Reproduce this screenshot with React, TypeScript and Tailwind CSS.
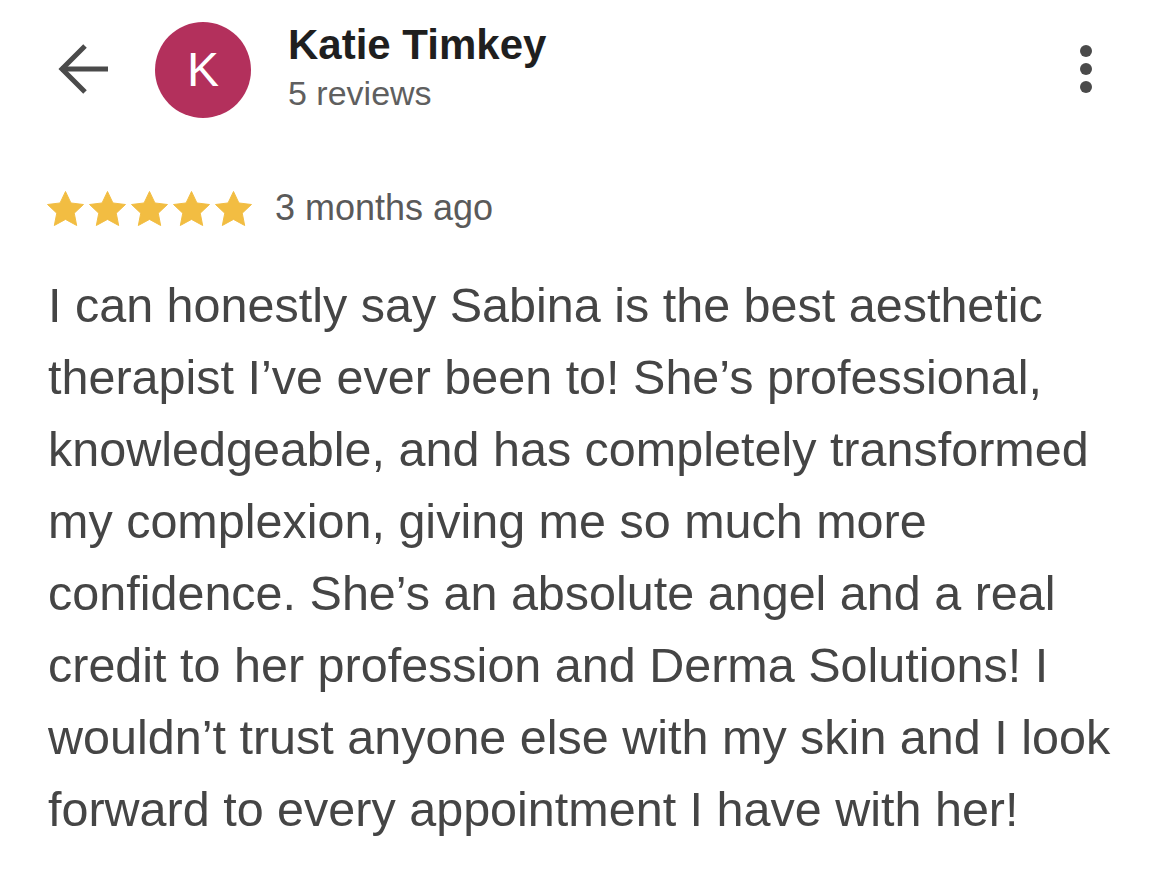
const lines = [
  'I can honestly say Sabina is the best aesthetic',
  'therapist I’ve ever been to! She’s professional,',
  'knowledgeable, and has completely transformed',
  'my complexion, giving me so much more',
  'confidence. She’s an absolute angel and a real',
  'credit to her profession and Derma Solutions! I',
  'wouldn’t trust anyone else with my skin and I look',
  'forward to every appointment I have with her!',
];

function Star() {
  return (
    <svg width="37" height="35" viewBox="0 0 38 36">
      <path
        d="M19 0.5l5.6 11.8 12.9 1.6-9.5 8.9 2.5 12.7L19 29.2 7.5 35.5 10 22.8 0.5 13.9l12.9-1.6z"
        fill="#f2bd42"
        stroke="#f2bd42"
        strokeWidth="1"
        strokeLinejoin="round"
      />
    </svg>
  );
}

function BackArrow() {
  return (
    <svg width="52" height="52" viewBox="0 0 52 52" className="mt-[21px]">
      <path d="M4 26H51" stroke="#4a4a4a" strokeWidth="5" fill="none" />
      <path d="M28 3L5 26L28 49" stroke="#4a4a4a" strokeWidth="5" fill="none" />
    </svg>
  );
}

export default function App() {
  return (
    <div className="w-[1170px] h-[869px] bg-white font-['Liberation_Sans',Arial,sans-serif] overflow-hidden">
      {/* Header */}
      <div className="flex items-start pt-[22px] pl-[57px] pr-[78px]">
        <BackArrow />
        <div className="ml-[46px] w-[96px] h-[96px] rounded-full bg-[#b3305c] flex items-center justify-center text-white text-[48px]">
          K
        </div>
        <div className="ml-[37px] flex flex-col">
          <div className="text-[42px] font-bold text-[#1f1f1f] leading-[46px]">Katie Timkey</div>
          <div className="text-[34px] text-[#5f5f5f] leading-[50px]">5 reviews</div>
        </div>
        <div className="ml-auto mt-[23px] flex flex-col gap-[6px] items-center">
          <span className="w-[12px] h-[12px] rounded-full bg-[#4a4a4a]" />
          <span className="w-[12px] h-[12px] rounded-full bg-[#4a4a4a]" />
          <span className="w-[12px] h-[12px] rounded-full bg-[#4a4a4a]" />
        </div>
      </div>

      {/* Rating */}
      <div className="flex items-center h-[36px] pl-[47px] mt-[72px]">
        <div className="flex gap-[5px]">
          <Star />
          <Star />
          <Star />
          <Star />
          <Star />
        </div>
        <span className="ml-[23px] text-[36px] leading-[36px] text-[#5a5a5a]">3 months ago</span>
      </div>

      {/* Body */}
      <p className="pl-[48px] mt-[43px] text-[48.5px] leading-[72px] text-[#454545]">
        {lines.map((l, i) => (
          <span key={i} className="block whitespace-nowrap">
            {l}
          </span>
        ))}
      </p>
    </div>
  );
}
